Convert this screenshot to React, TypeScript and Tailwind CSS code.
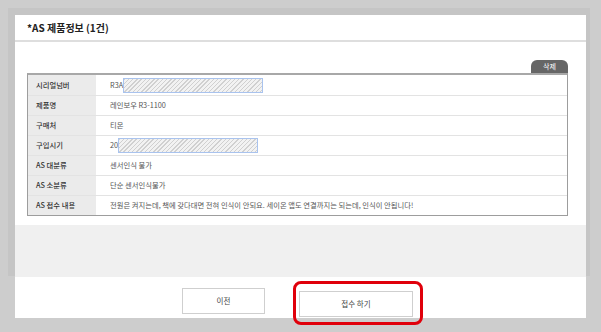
import React from 'react';

const font = { fontFamily: '"Noto Sans CJK KR", "Noto Sans", sans-serif' };

type Row = { label: string; value: React.ReactNode };

const Hatch: React.FC<{ className: string }> = ({ className }) => (
  <span
    className={`inline-block h-[15px] border border-[#a9c3ee] bg-[repeating-linear-gradient(135deg,#d0d0d0_0px,#d0d0d0_1px,#f2f2f2_1px,#f2f2f2_3px)] ${className}`}
  />
);

const rows: Row[] = [
  {
    label: '시리얼넘버',
    value: (
      <span className="flex items-center">
        R3A
        <Hatch className="w-[140px]" />
      </span>
    ),
  },
  { label: '제품명', value: '레인보우 R3-1100' },
  { label: '구매처', value: '티몬' },
  {
    label: '구입시기',
    value: (
      <span className="flex items-center">
        20
        <Hatch className="w-[140px]" />
      </span>
    ),
  },
  { label: 'AS 대분류', value: '센서인식 불가' },
  { label: 'AS 소분류', value: '단순 센서인식불가' },
  {
    label: 'AS 접수 내용',
    value: '전원은 켜지는데, 책에 갖다대면 전혀 인식이 안되요. 세이온 앱도 연결까지는 되는데, 인식이 안됩니다!',
  },
];

export default function App() {
  return (
    <div className="relative w-[601px] h-[332px] bg-[#cdcdcd] overflow-hidden" style={font}>
      {/* dimmed page behind the modal */}
      <div className="absolute left-[8px] top-[8px] w-[582px] h-[268px] bg-[#c5c5c5]" />

      <div className="relative ml-[15px] pt-[15px] w-[571px]">
        <div className="bg-white">
          {/* header */}
          <div className="h-[27px] border-b-2 border-[#dedede] pl-[12px] pt-[5px] text-[10px] font-bold text-[#222]">
            *AS 제품정보 (1건)
          </div>

          {/* body */}
          <div className="pt-[18px] pb-[9px] pl-[12px] pr-[18px]">
            <div className="flex justify-end">
              <button className="w-[37px] h-[13px] rounded-t-[6px] bg-[#666] text-white text-[7px] leading-[13px]">
                삭제
              </button>
            </div>
            <div className="border border-[#9d9d9d] border-t-2 border-t-[#a8a8a8]">
              {rows.map((r, i) => (
                <div
                  key={r.label}
                  className={`flex h-[20px] ${i > 0 ? 'border-t border-[#e3e3e3]' : ''}`}
                >
                  <div className="w-[68px] shrink-0 bg-[#ebebeb] pl-[8px] flex items-center text-[7.3px] font-medium text-[#333]">
                    {r.label}
                  </div>
                  <div className="flex-1 pl-[14px] flex items-center text-[7.3px] text-[#555]">
                    {r.value}
                  </div>
                </div>
              ))}
            </div>
          </div>

          {/* gray spacer */}
          <div className="h-[52px] bg-[#f0f0f0]" />

          {/* footer */}
          <div className="h-[41px] flex items-start pt-[11px] pl-[167px] gap-[34px]">
            <button className="w-[83px] h-[26px] border border-[#cfcfcf] bg-white text-[7.5px] text-[#444]">
              이전
            </button>
            <div className="relative">
              <button className="w-[114px] h-[26px] border border-[#cfcfcf] bg-white text-[7.5px] text-[#444]">
                접수 하기
              </button>
              <div className="absolute -left-[6px] -top-[7px] -right-[10px] -bottom-[8px] border-[3px] border-[#e0000b] rounded-[8px]" />
            </div>
          </div>
        </div>
      </div>
    </div>
  );
}
